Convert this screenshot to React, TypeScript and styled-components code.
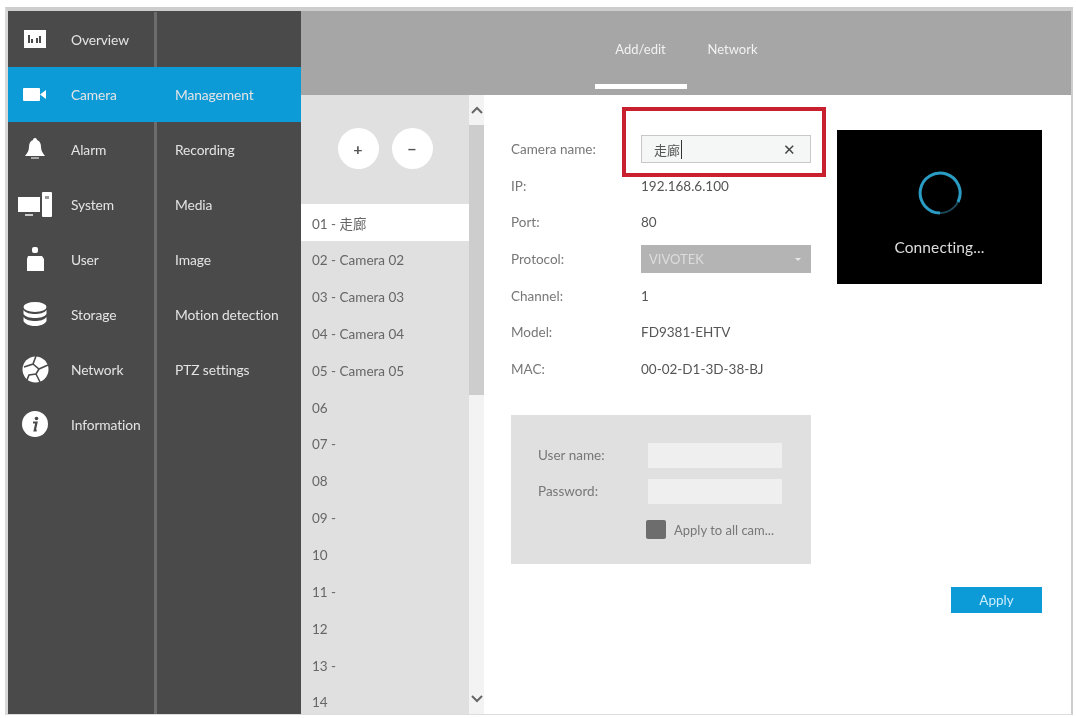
import React from 'react';
import styled, { createGlobalStyle } from 'styled-components';

const Global = createGlobalStyle`
  html, body { margin: 0; padding: 0; background: #fff; }
  body { font-family: Lato, "Noto Sans CJK SC", sans-serif; overflow: hidden; }
  * { box-sizing: border-box; }
`;

const Page = styled.div`
  width: 1076px; height: 718px; padding: 7px 3px 3px 5px; background: #fff;
`;
const Frame = styled.div`
  display: flex; width: 1068px; height: 708px;
  border: solid #cdcdcd; border-width: 4px 2px 1px 3px;
  border-left-color: #d8d8d8; border-bottom-color: #dcdcdc;
  filter: blur(0.7px);
`;
const Sidebar = styled.nav`
  width: 293px; flex: none; background: #4a4a4a; padding-top: 1px; overflow: hidden;
`;
const Row = styled.div<{ $active?: boolean }>`
  display: grid; grid-template-columns: 146px 147px; height: 55px;
  background: ${p => (p.$active ? '#0d9bd8' : 'transparent')};
`;
const Primary = styled.div`
  display: flex; align-items: center; height: 100%; padding-bottom: 1px;
`;
const IconSlot = styled.span`
  width: 63px; flex: none; display: flex; justify-content: center; align-items: center;
  padding-right: 9px;
`;
const NavText = styled.span`
  font-size: 13.8px; color: #e4e4e4; letter-spacing: -0.1px; white-space: nowrap;
`;
const Secondary = styled.div<{ $active?: boolean }>`
  display: flex; align-items: center; height: 100%; padding: 0 0 1px 18px;
  border-left: 3px solid ${p => (p.$active ? 'transparent' : '#6c6c6c')};
`;
const Body = styled.div`
  flex: 1; display: flex; flex-direction: column; min-width: 0; background: #fff;
`;
const Header = styled.header`
  height: 84px; flex: none; background: #a6a6a6; display: flex; justify-content: center;
  padding-left: 1px;
`;
const Tab = styled.div<{ $active?: boolean }>`
  width: 92px; height: 78px; padding-top: 30px; text-align: center; font-size: 13px; color: #f2f2f2;
  border-bottom: 5px solid ${p => (p.$active ? '#fff' : 'transparent')};
`;
const Content = styled.div`
  flex: 1; display: flex; min-height: 0;
`;
const ListPanel = styled.div`
  width: 168px; flex: none; background: #e0e0e0; overflow: hidden;
`;
const AddBar = styled.div`
  height: 109px; display: flex; justify-content: center; gap: 13px; padding-top: 33px;
`;
const RoundButton = styled.button`
  width: 41px; height: 41px; border: 0; border-radius: 50%; background: #fff; color: #555;
  font: 700 16px Lato, sans-serif; padding: 0;
`;
const CamRow = styled.div<{ $active?: boolean }>`
  height: 36.85px; display: flex; align-items: center; padding: 2px 0 0 11px; font-size: 13.5px;
  color: #666; background: ${p => (p.$active ? '#fff' : 'transparent')}; white-space: nowrap;
  font-family: Lato, "Noto Sans CJK SC", sans-serif;
`;
const Scrollbar = styled.div`
  width: 15px; flex: none; display: flex; flex-direction: column; background: #f3f3f3;
`;
const ScrollArrow = styled.div`
  height: 30px; display: flex; align-items: center; justify-content: center; color: #666;
`;
const ScrollThumb = styled.div`
  height: 270px; background: #cdcdcd;
`;
const ScrollFill = styled.div`
  flex: 1;
`;
const Main = styled.main`
  flex: 1; position: relative; display: flex; padding: 36px 29px 0 27px; gap: 26px;
`;
const FormColumn = styled.div`
  width: 300px; flex: none; display: flex; flex-direction: column;
`;
const Field = styled.div`
  display: grid; grid-template-columns: 130px 1fr; align-items: center; height: 36.6px;
  font-size: 13.5px; color: #777;
`;
const Value = styled.span`
  color: #555;
`;
const NameInput = styled.div`
  height: 28px; width: 170px; border: 1px solid #c8c8c8; background: #f5f7f7; display: flex;
  align-items: center; justify-content: space-between; padding: 0 14px 0 12px;
  color: #555; font-size: 13px;
`;
const Caret = styled.span`
  border-right: 1px solid #333; padding-right: 1px;
`;
const Clear = styled.span`
  font-size: 15px; color: #444;
`;
const Select = styled.div`
  height: 28px; background: #b4b4b4; color: #ddd; font-size: 13px; display: flex; align-items: center;
  justify-content: space-between; padding: 0 10px 0 8px;
`;
const Arrow = styled.span`
  width: 0; height: 0; border: 3px solid transparent; border-top-color: #e8e8e8; margin-top: 3px;
`;
const HighlightBox = styled.div`
  position: absolute; left: 138px; top: 12px; width: 204px; height: 70px; border: 4px solid #c9202f;
`;
const Credentials = styled.section`
  margin-top: 28px; height: 149px; background: #e0e0e0; padding: 28px 29px 0 27px;
  display: grid; grid-template-columns: 110px 1fr; grid-auto-rows: 36px; align-items: start;
  font-size: 13.5px; color: #777;
`;
const CredLabel = styled.span`
  line-height: 24px;
`;
const CredInput = styled.div`
  height: 25px; background: #efefef; width: 134px;
`;
const CheckRow = styled.div`
  grid-column: 2; display: flex; align-items: center; gap: 8px; margin-left: -2px; font-size: 13px;
  white-space: nowrap; padding-top: 5px;
`;
const CheckBox = styled.span`
  width: 20px; height: 19px; background: #6d6d6d; border-radius: 2px; flex: none;
`;
const RightColumn = styled.div`
  flex: 1; display: flex; flex-direction: column; align-items: stretch; margin-top: -1px;
`;
const Video = styled.div`
  height: 154px; background: #000; display: flex; flex-direction: column; align-items: center;
  padding-top: 40px; color: #ddd; font-size: 15.5px;
`;
const Connecting = styled.div`
  margin-top: 22px; letter-spacing: 0.1px;
`;
const ApplyButton = styled.button`
  align-self: flex-end; width: 91px; height: 26px; margin-top: 303px; border: 0; background: #0d9bd8;
  color: #cdeefc; font: 13.5px Lato, sans-serif; padding: 0;
`;

const W = '#fff';
const D = '#4a4a4a';
const icons: Record<string, React.ReactNode> = {
  overview: (
    <svg width="24" height="18" viewBox="0 0 24 18"><rect x="1" y="0" width="22" height="18" fill={W} /><path d="M6 5v8M9 9v4M14 8v5M17 6v7" stroke={D} strokeWidth="2" /></svg>
  ),
  camera: (
    <svg width="24" height="13" viewBox="0 0 24 13"><rect x="0" y="0" width="17" height="13" rx="1" fill={W} /><path d="M17 6.500 23 2v9z" fill={W} /></svg>
  ),
  alarm: (
    <svg width="24" height="22" viewBox="0 0 24 22"><path d="M12 0c1.500 0 2 1 2 2 3 1 4 4 4 7 0 4 2 6 4 9H2c2-3 4-5 4-9 0-3 1-6 4-7 0-1 .5-2 2-2z" fill={W} /><rect x="8" y="19" width="8" height="2" fill={W} opacity=".5" /></svg>
  ),
  system: (
    <svg width="34" height="25" viewBox="0 0 34 25"><rect x="0" y="5" width="22" height="15" fill={W} /><rect x="7" y="22" width="8" height="2" fill={W} opacity=".7" /><rect x="24" y="0" width="10" height="25" rx="1" fill={W} /><rect x="27" y="4" width="4" height="3" fill="#999" /></svg>
  ),
  user: (
    <svg width="18" height="24" viewBox="0 0 18 24"><rect x="6" y="0" width="6" height="6" rx="2" fill={W} /><path d="M2 9h14l2 3v12H1V12z" fill={W} /></svg>
  ),
  storage: (
    <svg width="24" height="24" viewBox="0 0 24 24"><ellipse cx="12" cy="5" rx="11.500" ry="5" fill={W} /><path d="M.5 8c2 3 7 4 11.500 4s9.500-1 11.500-4v4c-2 3-7 4-11.500 4S2.500 15 .5 12z" fill={W} /><path d="M.5 15c2 3 7 4 11.500 4s9.500-1 11.500-4v4c-1 3-7 5-11.500 5S1.500 22 .5 19z" fill={W} /></svg>
  ),
  network: (
    <svg width="27" height="29" viewBox="0 0 27 29"><circle cx="13.500" cy="14.500" r="13" fill={W} /><path d="M14 1 11 9 2 12M11 9l6 5 9-4M17 14l-3 5-7 1-2 5M14 19l4 8" stroke={D} strokeWidth="1.600" fill="none" /></svg>
  ),
  info: (
    <svg width="26" height="26" viewBox="0 0 26 26"><circle cx="13" cy="13" r="13" fill={W} /><circle cx="14.500" cy="7.500" r="1.800" fill={D} /><path d="M11 11.500h3.500l-1.800 8h2" stroke={D} strokeWidth="2.200" fill="none" /></svg>
  ),
};

const nav = [
  ['overview', 'Overview', ''],
  ['camera', 'Camera', 'Management'],
  ['alarm', 'Alarm', 'Recording'],
  ['system', 'System', 'Media'],
  ['user', 'User', 'Image'],
  ['storage', 'Storage', 'Motion detection'],
  ['network', 'Network', 'PTZ settings'],
  ['info', 'Information', ''],
  ['', '', ''],
  ['', '', ''],
  ['', '', ''],
  ['', '', ''],
  ['', '', ''],
];

const cams = ['01 - 走廊', '02 - Camera 02', '03 - Camera 03', '04 - Camera 04', '05 - Camera 05', '06', '07 -', '08', '09 -', '10', '11 -', '12', '13 -', '14'];

const fields = [
  ['IP:', '192.168.6.100'],
  ['Port:', '80'],
];
const fieldsAfter = [
  ['Channel:', '1'],
  ['Model:', 'FD9381-EHTV'],
  ['MAC:', '00-02-D1-3D-38-BJ'],
];

export default function App() {
  return (
    <Page>
      <Global />
      <Frame>
        <Sidebar>
          {nav.map(([icon, label, sub], i) => (
            <Row key={i} $active={i === 1}>
              <Primary>
                <IconSlot>{icons[icon]}</IconSlot>
                <NavText>{label}</NavText>
              </Primary>
              <Secondary $active={i === 1}>
                <NavText>{sub}</NavText>
              </Secondary>
            </Row>
          ))}
        </Sidebar>
        <Body>
          <Header>
            <Tab $active>Add/edit</Tab>
            <Tab>Network</Tab>
          </Header>
          <Content>
            <ListPanel>
              <AddBar>
                <RoundButton>+</RoundButton>
                <RoundButton>−</RoundButton>
              </AddBar>
              {cams.map((c, i) => (
                <CamRow key={c} $active={i === 0}>{c}</CamRow>
              ))}
            </ListPanel>
            <Scrollbar>
              <ScrollArrow>
                <svg width="12" height="8" viewBox="0 0 12 8"><path d="M1 7l5-5 5 5" stroke="currentColor" strokeWidth="2" fill="none" /></svg>
              </ScrollArrow>
              <ScrollThumb />
              <ScrollFill />
              <ScrollArrow>
                <svg width="12" height="8" viewBox="0 0 12 8"><path d="M1 1l5 5 5-5" stroke="currentColor" strokeWidth="2" fill="none" /></svg>
              </ScrollArrow>
            </Scrollbar>
            <Main>
              <FormColumn>
                <Field>
                  <span>Camera name:</span>
                  <NameInput><Caret>走廊</Caret><Clear>✕</Clear></NameInput>
                </Field>
                {fields.map(([k, v]) => (
                  <Field key={k}><span>{k}</span><Value>{v}</Value></Field>
                ))}
                <Field>
                  <span>Protocol:</span>
                  <Select>VIVOTEK<Arrow /></Select>
                </Field>
                {fieldsAfter.map(([k, v]) => (
                  <Field key={k}><span>{k}</span><Value>{v}</Value></Field>
                ))}
                <Credentials>
                  <CredLabel>User name:</CredLabel>
                  <CredInput />
                  <CredLabel>Password:</CredLabel>
                  <CredInput />
                  <CheckRow><CheckBox />Apply to all cam...</CheckRow>
                </Credentials>
              </FormColumn>
              <RightColumn>
                <Video>
                  <svg width="46" height="46" viewBox="0 0 46 46">
                    <circle cx="23" cy="23" r="20" stroke="#1c4a5a" strokeWidth="2" fill="none" />
                    <path d="M23 43A20 20 0 1 1 41 32" stroke="#2a9cc4" strokeWidth="3" fill="none" />
                  </svg>
                  <Connecting>Connecting...</Connecting>
                </Video>
                <ApplyButton>Apply</ApplyButton>
              </RightColumn>
              <HighlightBox />
            </Main>
          </Content>
        </Body>
      </Frame>
    </Page>
  );
}
